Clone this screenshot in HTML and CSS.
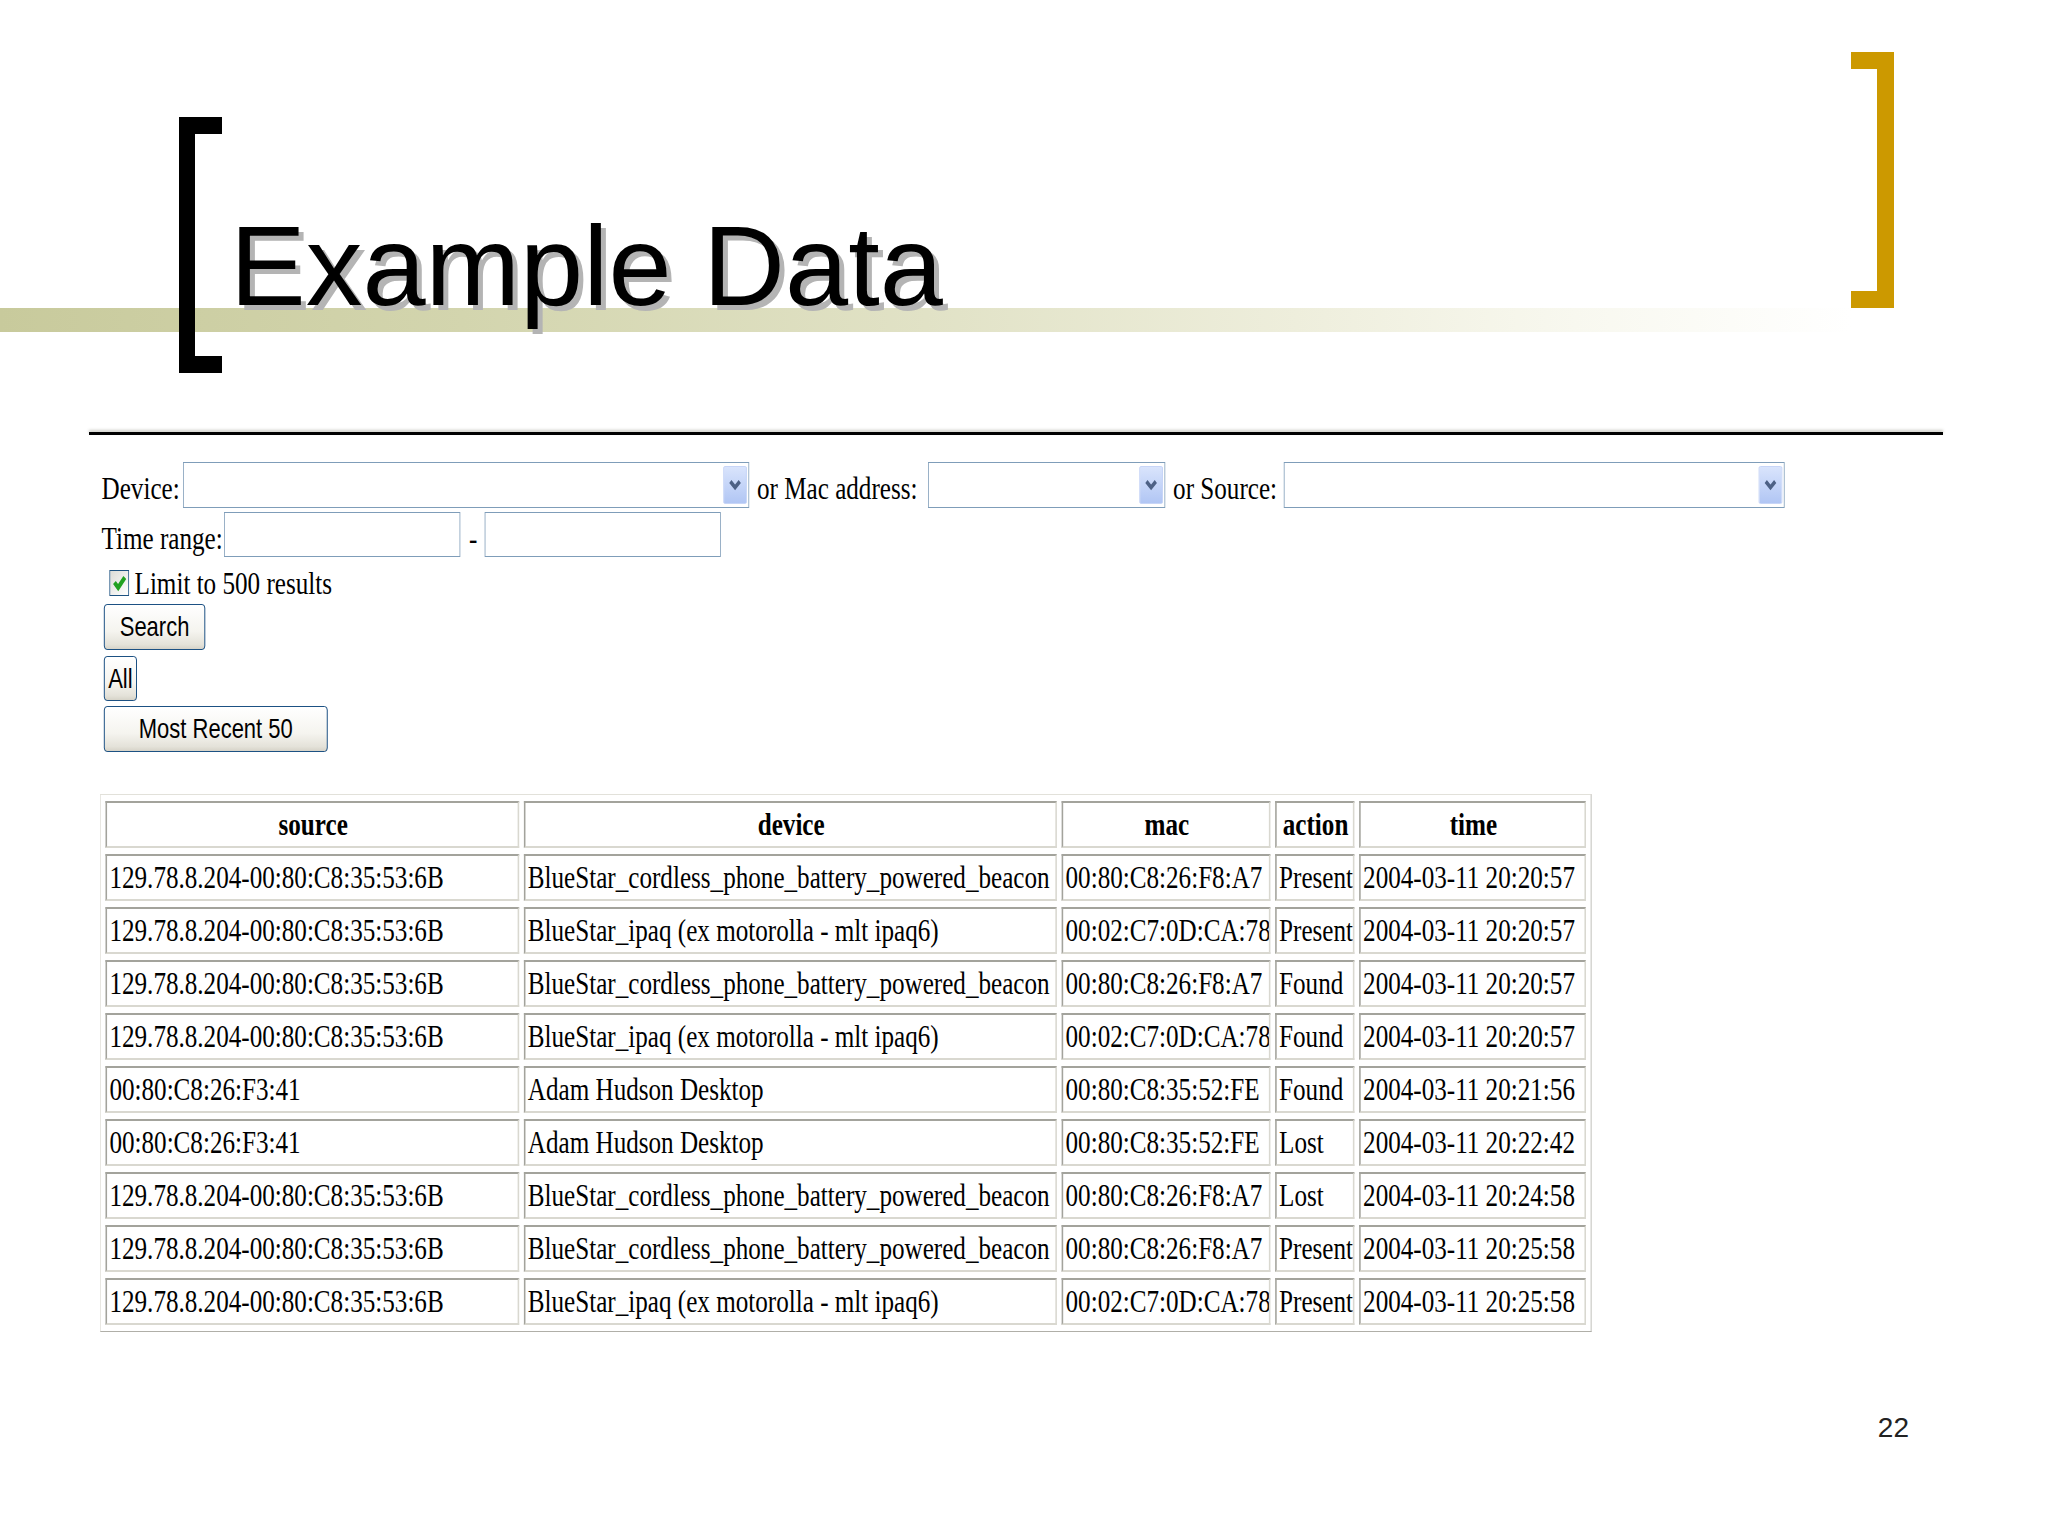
FILE: index.html
```html
<!DOCTYPE html>
<html lang="en">
<head>
    <meta charset="UTF-8">
    <meta name="viewport" content="width=device-width, initial-scale=1.0">
    <title>Example Data</title>
    <link rel="stylesheet" href="styles.css">
</head>
<body>
    <div class="slide">
        <div class="header">
            <div class="band"></div>
            <div class="bracket bracket-left"></div>
            <div class="bracket bracket-right"></div>
            <h1 class="title">Example Data</h1>
        </div>
        <div class="rule"></div>

        <!-- the browser capture on the slide is squeezed sideways -->
        <div class="shot">
            <form class="query">
                <div class="row row-find">
                    <span class="lbl lbl-device">Device:</span>
                    <div class="combo combo-device">
                        <span class="combo-arrow"><svg width="18" height="14" viewBox="0 0 18 14"><path d="M3 3.5 L9 9.5 L15 3.5" fill="none" stroke="#4d6185" stroke-width="4"/></svg></span>
                    </div>
                    <span class="lbl lbl-mac">or Mac address:</span>
                    <div class="combo combo-mac">
                        <span class="combo-arrow"><svg width="18" height="14" viewBox="0 0 18 14"><path d="M3 3.5 L9 9.5 L15 3.5" fill="none" stroke="#4d6185" stroke-width="4"/></svg></span>
                    </div>
                    <span class="lbl lbl-source">or Source:</span>
                    <div class="combo combo-source">
                        <span class="combo-arrow"><svg width="18" height="14" viewBox="0 0 18 14"><path d="M3 3.5 L9 9.5 L15 3.5" fill="none" stroke="#4d6185" stroke-width="4"/></svg></span>
                    </div>
                </div>
                <div class="row row-time">
                    <span class="lbl lbl-time">Time range:</span>
                    <input class="field" type="text">
                    <span class="lbl lbl-dash">-</span>
                    <input class="field" type="text">
                </div>
                <div class="row row-limit">
                    <span class="check"><svg width="22" height="22" viewBox="0 0 13 13"><path d="M2.6 6.2 L5.4 9.2 L10.4 3.2" fill="none" stroke="#21a121" stroke-width="2.8"/></svg></span>
                    <span class="lbl lbl-limit">Limit to 500 results</span>
                </div>
                <button class="btn btn-search" type="button">Search</button>
                <button class="btn btn-all" type="button">All</button>
                <button class="btn btn-recent" type="button">Most Recent 50</button>
            </form>

            <table class="results">
                <thead>
                    <tr>
                        <th class="c-source">source</th>
                        <th class="c-device">device</th>
                        <th class="c-mac">mac</th>
                        <th class="c-action">action</th>
                        <th class="c-time">time</th>
                    </tr>
                </thead>
                <tbody>
                    <tr><td>129.78.8.204-00:80:C8:35:53:6B</td><td>BlueStar_cordless_phone_battery_powered_beacon</td><td>00:80:C8:26:F8:A7</td><td>Present</td><td>2004-03-11 20:20:57</td></tr>
                    <tr><td>129.78.8.204-00:80:C8:35:53:6B</td><td>BlueStar_ipaq (ex motorolla - mlt ipaq6)</td><td>00:02:C7:0D:CA:78</td><td>Present</td><td>2004-03-11 20:20:57</td></tr>
                    <tr><td>129.78.8.204-00:80:C8:35:53:6B</td><td>BlueStar_cordless_phone_battery_powered_beacon</td><td>00:80:C8:26:F8:A7</td><td>Found</td><td>2004-03-11 20:20:57</td></tr>
                    <tr><td>129.78.8.204-00:80:C8:35:53:6B</td><td>BlueStar_ipaq (ex motorolla - mlt ipaq6)</td><td>00:02:C7:0D:CA:78</td><td>Found</td><td>2004-03-11 20:20:57</td></tr>
                    <tr><td>00:80:C8:26:F3:41</td><td>Adam Hudson Desktop</td><td>00:80:C8:35:52:FE</td><td>Found</td><td>2004-03-11 20:21:56</td></tr>
                    <tr><td>00:80:C8:26:F3:41</td><td>Adam Hudson Desktop</td><td>00:80:C8:35:52:FE</td><td>Lost</td><td>2004-03-11 20:22:42</td></tr>
                    <tr><td>129.78.8.204-00:80:C8:35:53:6B</td><td>BlueStar_cordless_phone_battery_powered_beacon</td><td>00:80:C8:26:F8:A7</td><td>Lost</td><td>2004-03-11 20:24:58</td></tr>
                    <tr><td>129.78.8.204-00:80:C8:35:53:6B</td><td>BlueStar_cordless_phone_battery_powered_beacon</td><td>00:80:C8:26:F8:A7</td><td>Present</td><td>2004-03-11 20:25:58</td></tr>
                    <tr><td>129.78.8.204-00:80:C8:35:53:6B</td><td>BlueStar_ipaq (ex motorolla - mlt ipaq6)</td><td>00:02:C7:0D:CA:78</td><td>Present</td><td>2004-03-11 20:25:58</td></tr>
                </tbody>
            </table>
        </div>

        <div class="pagenum">22</div>
    </div>
</body>
</html>
```

FILE: styles.css
```css
*, *::before, *::after {
    box-sizing: border-box;
}
body {
    margin: 0;
    background: white;
}
.slide {
    width: 2048px;
    height: 1536px;
    overflow: hidden;
    background: white;
    font-family: "Liberation Sans", Arial, sans-serif;
}

/* title area */
.header {
    position: relative;
    height: 432px;
}
.band {
    position: absolute;
    top: 308px;
    left: 0;
    width: 1852px;
    height: 24px;
    background: linear-gradient(to right, #c8ca9c 0%, #d3d5ae 25%, #e1e2c6 50%, #eeeedc 70%, #f8f8ef 85%, #ffffff 100%);
}
.bracket {
    position: absolute;
    height: 256px;
    width: 43px;
    border-style: solid;
    border-width: 17px 0;
}
.bracket-left {
    left: 179px;
    top: 117px;
    border-color: #000;
    border-left: 16px solid #000;
}
.bracket-right {
    left: 1851px;
    top: 52px;
    border-color: #cc9900;
    border-right: 17px solid #cc9900;
}
.title {
    position: relative;
    margin: 0;
    padding: 210px 0 0 230px;
    font-size: 113.5px;
    line-height: 112px;
    font-weight: normal;
    color: #000;
    text-shadow: 5px 5px 0 #b4b4b4;
}
.rule {
    margin-left: 89px;
    width: 1854px;
    height: 3px;
    background: #000;
    box-shadow: 0 -2px 3px rgba(110, 110, 90, 0.35);
}

/* browser capture */
.shot {
    margin-left: 100px;
    width: 2146px;
    padding-top: 27px;
    transform: scaleX(0.785);
    transform-origin: 0 0;
    font-family: "Liberation Serif", "Times New Roman", serif;
    font-size: 32px;
    color: #000;
}
.query {
    margin: 0;
}
.row {
    display: flex;
    align-items: center;
}
.row-find {
    height: 46px;
}
.row-time {
    margin-top: 4px;
    height: 45px;
}
.row-limit {
    margin-top: 11px;
    height: 30px;
}
.lbl {
    white-space: nowrap;
}
.row-find .lbl,
.row-time .lbl {
    padding-top: 7px;
}
.lbl-device {
    width: 106px;
    padding-left: 2px;
}
.lbl-mac {
    width: 228px;
    padding-left: 10px;
}
.lbl-source {
    width: 151px;
    padding-left: 10px;
}
.lbl-time {
    width: 158px;
    padding-left: 2px;
}
.lbl-dash {
    width: 31px;
    padding-left: 11px;
}
.lbl-limit {
    margin-left: 7px;
}
.combo {
    height: 46px;
    border: 1px solid #7f9db9;
    background: white;
    display: flex;
    justify-content: flex-end;
    align-items: center;
    padding-right: 2px;
}
.combo-device {
    width: 721px;
}
.combo-mac {
    width: 302px;
}
.combo-source {
    width: 638px;
}
.combo-arrow {
    width: 30px;
    height: 38px;
    border: 1px solid #c0d0f6;
    border-radius: 2px;
    background: linear-gradient(to bottom, #d9e4fc, #b1c6f4);
    display: flex;
    justify-content: center;
    align-items: center;
}
.field {
    width: 301px;
    height: 45px;
    margin: 0;
    padding: 0;
    border: 1px solid #7f9db9;
    background: white;
}
.check {
    margin-left: 12px;
    width: 25px;
    height: 26px;
    border: 1px solid #1c5180;
    background: linear-gradient(135deg, #dcdcd7, #ffffff);
    display: flex;
    justify-content: center;
    align-items: center;
}
.btn {
    display: block;
    margin: 6px 0 0 5px;
    padding: 0;
    height: 45px;
    border: 1px solid #003c74;
    border-radius: 4px;
    background: linear-gradient(to bottom, #ffffff 0%, #f5f4ef 60%, #e4e2d9 90%, #d6d3c8 100%);
    font-family: "Liberation Sans", Arial, sans-serif;
    font-size: 28px;
    color: #000;
    text-align: center;
}
.btn-search {
    width: 129px;
    height: 46px;
}
.btn-all {
    width: 42px;
}
.btn-recent {
    margin-top: 5px;
    width: 285px;
    height: 46px;
}

.results {
    margin-top: 42px;
    width: 1900px;
    table-layout: fixed;
    border-collapse: separate;
    border-spacing: 6px;
    border: 1px solid;
    border-color: #e2e1da #b0afa8 #b0afa8 #e2e1da;
}
.results th,
.results td {
    height: 47px;
    padding: 0 1px 0 3px;
    border: 2px solid;
    border-color: #a3a39c #d9d8d0 #d9d8d0 #a3a39c;
    white-space: nowrap;
    overflow: hidden;
    vertical-align: middle;
}
.results th {
    font-weight: bold;
    text-align: center;
}
.results td {
    text-align: left;
}
.c-source { width: 527px; }
.c-device { width: 679px; }
.c-mac { width: 266px; }
.c-action { width: 101px; }
.c-time { width: 289px; }

.pagenum {
    margin-top: 80px;
    padding-right: 139px;
    text-align: right;
    font-size: 28px;
    line-height: 32px;
    color: #222;
}
```
